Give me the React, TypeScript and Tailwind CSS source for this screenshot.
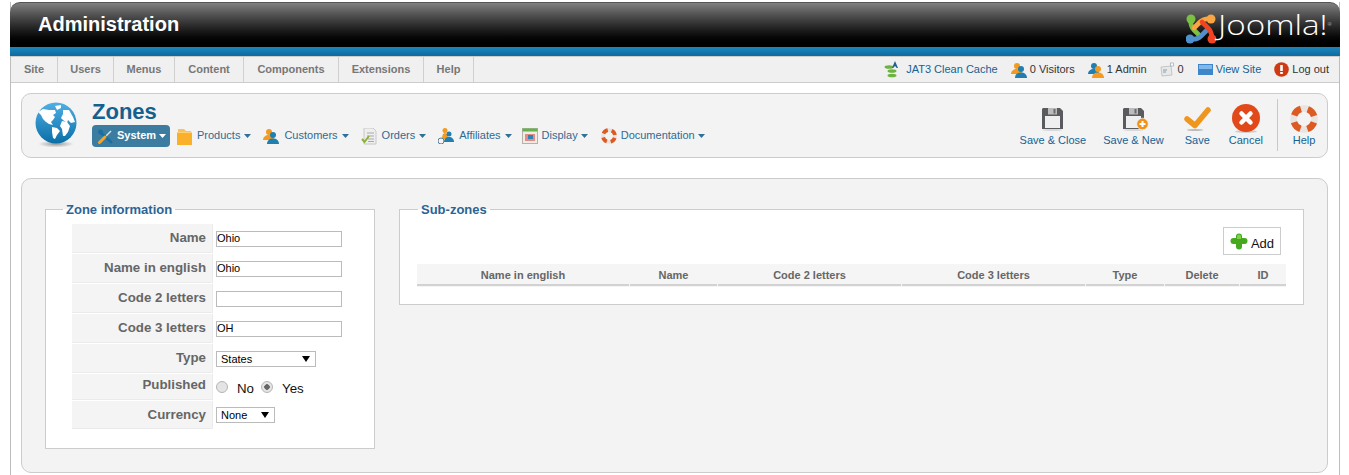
import type { ReactNode } from "react";

const arial = "font-['Liberation_Sans',Arial,sans-serif]";

function Caret({ white }: { white?: boolean }) {
  return (
    <svg width="7" height="4" viewBox="0 0 7 4" className="shrink-0">
      <path d="M0 0h7L3.5 4z" fill={white ? "#ffffff" : "#2f7098"} />
    </svg>
  );
}

function JoomlaLogo() {
  const hooks = [
    { c: "#7ac143", d: "M5 5 Q4 12 8 16 L14 22", x: 5, y: 5 },
    { c: "#f9a541", d: "M25 5 Q18 4 14 8 L8 14", x: 25, y: 5 },
    { c: "#5091cd", d: "M4 25 Q11 26 15 22 L21 16", x: 4, y: 25 },
    { c: "#f44321", d: "M26 25 Q26 18 22 14 L16 8", x: 26, y: 25 },
  ];
  return (
    <svg width="30" height="30" viewBox="0 0 30 30" className="shrink-0">
      {hooks.map((h) => (
        <g key={h.c}>
          <path d={h.d} fill="none" stroke={h.c} strokeWidth="4.600" strokeLinecap="round" />
          <circle cx={h.x} cy={h.y} r="4.500" fill={h.c} />
        </g>
      ))}
    </svg>
  );
}

function People({ front = "blue", size = 16 }: { front?: "blue" | "orange"; size?: number }) {
  const back = front === "blue" ? "#f39a1f" : "#1f7fb0";
  const main = front === "blue" ? "#1f7fb0" : "#f39a1f";
  return (
    <svg width={size} height={size} viewBox="0 0 16 16" className="shrink-0">
      <circle cx="6" cy="4" r="3" fill={back} />
      <path d="M0 12c0-3 2.500-5 6-5s5 2 5 5z" fill={back} />
      <circle cx="10" cy="7" r="3" fill={main} />
      <path d="M4 16c0-3.500 2.500-5.500 6-5.500s6 2 6 5.500z" fill={main} />
    </svg>
  );
}

function LifeRing({ size }: { size: number }) {
  return (
    <svg width={size} height={size} viewBox="0 0 28 28" className="shrink-0">
      <circle cx="14" cy="14" r="10.500" fill="none" stroke="#e9e4df" strokeWidth="6.500" />
      <circle
        cx="14"
        cy="14"
        r="10.500"
        fill="none"
        stroke="#dd5a22"
        strokeWidth="6.500"
        strokeDasharray="9.500 7"
        strokeDashoffset="-3.500"
      />
    </svg>
  );
}

function Globe() {
  return (
    <svg width="44" height="46" viewBox="0 0 44 46" className="shrink-0">
      <defs>
        <linearGradient id="globe" x1="0" y1="0" x2="0" y2="1">
          <stop offset="0" stopColor="#4fb0e6" />
          <stop offset="1" stopColor="#0a6ea6" />
        </linearGradient>
        <radialGradient id="shade">
          <stop offset="0" stopColor="#999" />
          <stop offset="1" stopColor="#f3f3f3" />
        </radialGradient>
      </defs>
      <ellipse cx="21" cy="42" rx="18" ry="3.500" fill="url(#shade)" />
      <circle cx="21" cy="21" r="20.500" fill="url(#globe)" />
      <g fill="#ffffff">
        <path d="M3 10l5-3 6 1 6 0 1 3-3 2 2 2-2 3-2 2 2 3-4-1-3-2-3-3-2-4z" />
        <path d="M17 25l5 1 3 3-3 4-2 4-2-1-1-6z" />
        <path d="M20 4l6-1 0 3-4 2z" />
        <path d="M28 8l6 0 4 7 2 5-4 1-3-3-1 3-4-3-2-2 2-4z" />
        <path d="M27 19l5 1 3 4-2 6-3 4-2 0-1-7-2-3z" />
      </g>
    </svg>
  );
}

function Floppy({ plus }: { plus?: boolean }) {
  return (
    <svg width="21" height="23" viewBox="0 0 21 23" className="mt-[2px] shrink-0 overflow-visible">
      <ellipse cx="10.500" cy="22" rx="10" ry="1" fill="#d8d8d8" />
      <path d="M1 0h17l3 3v18H0V1z" fill="#5a5b5e" />
      <rect x="6" y="0" width="9" height="6.500" fill="#bcbcbc" />
      <rect x="11.500" y="1" width="2" height="4.500" fill="#6c6c6c" />
      <rect x="3" y="8" width="15" height="12" fill="#efefef" />
      <rect x="17" y="19" width="1" height="1" fill="#ffffff" />
      {plus && (
        <g>
          <circle cx="19.500" cy="16" r="5.800" fill="#f0921a" stroke="#f3f3f3" strokeWidth="0.800" />
          <path d="M16.500 16h6M19.500 13v6" stroke="#ffffff" strokeWidth="2" />
        </g>
      )}
    </svg>
  );
}

function Check() {
  return (
    <svg width="27" height="24" viewBox="0 0 27 24" className="mt-px shrink-0">
      <path d="M3 12l8 6.500L24 3" fill="none" stroke="#ee961e" strokeWidth="5.500" strokeLinecap="round" strokeLinejoin="round" />
      <ellipse cx="11" cy="23" rx="8" ry="1" fill="#bbbbbb" />
    </svg>
  );
}

function CancelIcon() {
  return (
    <svg width="28" height="29" viewBox="0 0 28 29" className="shrink-0">
      <ellipse cx="14" cy="27.500" rx="11" ry="1.500" fill="#cccccc" />
      <circle cx="14" cy="14" r="14" fill="#e2491a" />
      <path d="M9.500 9.500l9 9M18.500 9.500l-9 9" stroke="#ffffff" strokeWidth="4.500" strokeLinecap="round" />
    </svg>
  );
}

function Tools() {
  return (
    <svg width="15" height="15" viewBox="0 0 15 15" className="shrink-0">
      <path d="M8 7l5-5" stroke="#d7e3ea" strokeWidth="1.500" />
      <path d="M2 3l11 10" stroke="#1a6fa0" strokeWidth="2.800" strokeLinecap="round" />
      <circle cx="2.500" cy="3" r="2.400" fill="#1a6fa0" />
      <path d="M1.500 13.500L7 8" stroke="#f4a62a" strokeWidth="3" strokeLinecap="round" />
    </svg>
  );
}

function Folder() {
  return (
    <svg width="15" height="17" viewBox="0 0 15 17" className="shrink-0">
      <path d="M1 1h6l2 2h5v3H1z" fill="#f7c35a" />
      <rect y="4" width="15" height="13" fill="#fbb02a" />
      <rect y="4" width="15" height="1" fill="#ffd27a" />
    </svg>
  );
}

function Orders() {
  return (
    <svg width="16" height="17" viewBox="0 0 16 17" className="shrink-0">
      <path d="M3 0h9l3 3v13H3z" fill="#eeeeee" stroke="#c8c8c8" />
      <path d="M6 5h7M6 8h7M7 11h6M7 13.500h6" stroke="#a9a9a9" />
      <path d="M1 11l2.500 3L8 8" fill="none" stroke="#8cb13d" strokeWidth="2" />
    </svg>
  );
}

function Affiliates() {
  return (
    <svg width="16" height="16" viewBox="0 0 16 16" className="shrink-0">
      <circle cx="7" cy="2.500" r="2.500" fill="#f39a1f" />
      <path d="M4 11c0-4 1-6 3-6s3 2 3 6z" fill="#f39a1f" />
      <circle cx="11" cy="6" r="2.500" fill="#1f7fb0" />
      <path d="M6 14c0-3 2-5 5-5s5 2 5 5z" fill="#1f7fb0" />
      <circle cx="3" cy="13" r="3" fill="#f3f3f3" stroke="#5a7f99" />
    </svg>
  );
}

function Display() {
  return (
    <svg width="16" height="17" viewBox="0 0 16 17" className="shrink-0">
      <rect x="0.500" y="0.500" width="15" height="15" fill="#f1ebe6" stroke="#b9b0aa" />
      <rect x="0.500" y="0.500" width="15" height="3" fill="#63b34d" />
      <rect x="3" y="6" width="10" height="7" fill="#e58b84" />
      <rect x="6" y="7" width="5" height="4" fill="#2a86b8" />
    </svg>
  );
}

function Jat() {
  return (
    <svg width="17" height="17" viewBox="0 0 17 17" className="shrink-0">
      <ellipse cx="5" cy="6" rx="4.500" ry="1.800" fill="#6cb33f" />
      <ellipse cx="8" cy="10" rx="4.500" ry="1.800" fill="#6cb33f" />
      <ellipse cx="8" cy="14.500" rx="4.500" ry="1.800" fill="#6cb33f" />
      <path d="M11 0l3 7h-1.500l-.6-1.500h-2l-.5 1.500H8z" fill="#1f5f93" />
    </svg>
  );
}

function MessageIcon() {
  return (
    <svg width="15" height="15" viewBox="0 0 15 15" className="shrink-0">
      <path d="M1 5l10-1 1 9-10 1z" fill="#e8e8e8" stroke="#bbbbbb" strokeWidth="0.800" />
      <path d="M3 8h4M3 10h3" stroke="#7d9fb8" />
      <rect x="10.500" y="1" width="3" height="3" fill="#ffffff" stroke="#99aabb" strokeWidth="0.700" />
    </svg>
  );
}

function ViewSite() {
  return (
    <svg width="15" height="11" viewBox="0 0 15 11" className="shrink-0">
      <rect width="15" height="11" fill="#3f86c8" />
      <rect x="1" y="1" width="13" height="4" fill="#7fb8ea" />
    </svg>
  );
}

function LogOut() {
  return (
    <svg width="15" height="15" viewBox="0 0 15 15" className="shrink-0">
      <circle cx="7.500" cy="7.500" r="7.300" fill="#cf3a12" />
      <rect x="6.200" y="3" width="2.600" height="6" fill="#ffffff" />
      <rect x="6.200" y="10" width="2.600" height="2" fill="#ffffff" />
    </svg>
  );
}

function GreenPlus() {
  return (
    <svg width="18" height="18" viewBox="0 0 18 18" className="mt-[1px] shrink-0">
      <path
        d="M6 5V3.500a3 3 0 0 1 6 0V5h2.500a3 3 0 0 1 0 6H12v2.500a3 3 0 0 1-6 0V11H3.500a3 3 0 0 1 0-6z"
        fill="#45a81e"
      />
      <path d="M7 3.500a2 2 0 0 1 4 0V6H7z" fill="#7ed348" />
    </svg>
  );
}

function TopMenuItem({ label, width }: { label: string; width: string }) {
  return (
    <div className={`flex h-full items-center justify-center border-r border-[#d0d0d0] text-[11px] font-bold text-[#777777] ${width}`}>
      {label}
    </div>
  );
}

function StatusItem({ icon, children, tone, gap = "gap-[3px]" }: { icon: ReactNode; children: string; tone: string; gap?: string }) {
  return (
    <div className={`flex items-center text-[11px] ${gap} ${tone}`}>
      {icon}
      <span>{children}</span>
    </div>
  );
}

function SubMenuItem({ icon, label, margin = "ml-[12px]", gap = "gap-[5px]" }: { icon: ReactNode; label: string; margin?: string; gap?: string }) {
  return (
    <div className={`flex items-center text-[11px] text-[#2f6a93] ${gap} ${margin}`}>
      {icon}
      <span className="mr-[-1px] pb-[2px]">{label}</span>
      <Caret />
    </div>
  );
}

function ToolButton({ icon, label, margin = "" }: { icon: ReactNode; label: string; margin?: string }) {
  return (
    <div className={`flex flex-col items-center ${margin}`}>
      <div className="flex h-[29px] items-center justify-center">{icon}</div>
      <span className="mt-px text-[11px] leading-[13px] text-[#146295]">{label}</span>
    </div>
  );
}

function Row({ label, height = "h-[29px]", labelClass = "", children }: { label: string; height?: string; labelClass?: string; children: ReactNode }) {
  return (
    <div className={`flex ${height}`}>
      <div className={`flex w-[141px] items-center justify-end border-r border-b border-[#ebebeb] bg-[#f4f4f4] pr-[6px] text-[13.3px] font-bold text-[#666666] ${labelClass}`}>
        {label}
      </div>
      <div className="flex items-center pl-[3px]">{children}</div>
    </div>
  );
}

function TextInput({ value }: { value: string }) {
  return (
    <input
      readOnly
      value={value}
      className="h-[16px] w-[126px] border border-[#bbbbbb] bg-white text-[11px] text-black outline-none"
    />
  );
}

function SelectBox({ value, width }: { value: string; width: string }) {
  return (
    <div className={`relative h-[16px] ${width}`}>
      <select
        value={value}
        onChange={() => undefined}
        className="block h-full w-full appearance-none border border-[#bbbbbb] bg-white pl-[4px] text-[11px] leading-[14px] text-black outline-none"
      >
        <option>{value}</option>
      </select>
      <span className="pointer-events-none absolute top-[5px] right-[6px] h-0 w-0 border-x-[4px] border-t-[6px] border-x-transparent border-t-black" />
    </div>
  );
}

function Radio({ on }: { on?: boolean }) {
  return (
    <input
      type="radio"
      readOnly
      checked={!!on}
      className={`h-[12px] w-[12px] appearance-none rounded-full border border-[#b5b5b5] ${
        on ? "bg-[radial-gradient(circle,#666666_0_2.5px,#e4e4e4_3px)]" : "bg-[#e4e4e4]"
      }`}
    />
  );
}

const columns = ["Name in english", "Name", "Code 2 letters", "Code 3 letters", "Type", "Delete", "ID"];

export default function App() {
  return (
    <div className={`h-[475px] overflow-hidden bg-white pt-[2px] ${arial}`}>
      <div className="ml-[10px] h-[473px] w-[1330px] border-x border-[#bdbdbd]">
        <header className="mx-[-1px] flex h-[45px] items-start justify-between rounded-t-[10px] border-t border-[#555555] bg-gradient-to-b from-[#808080] to-[#000000] pr-[10px] pl-[28px]">
          <h1 className="pt-[8px] text-[20px] leading-[26px] font-bold text-white">Administration</h1>
          <div className="flex items-center pt-[5px]">
            <JoomlaLogo />
            <span className="mt-[2px] ml-[2px] w-[112px] origin-left scale-x-[1.23] whitespace-nowrap font-['Open_Sans',sans-serif] text-[27px] leading-[30px] font-light text-white">
              Joomla!<span className="relative -top-[9px] text-[4px]">®</span>
            </span>
          </div>
        </header>
        <div className="mx-[-1px] h-[9px] bg-gradient-to-b from-[#1c86bd] to-[#0d6b9f]" />

        <nav className="flex h-[27px] items-center justify-between border-y border-[#cccccc] bg-[#f0f0f0] pr-[10px]">
          <div className="flex h-full">
            <TopMenuItem label="Site" width="w-[47px]" />
            <TopMenuItem label="Users" width="w-[56px]" />
            <TopMenuItem label="Menus" width="w-[61px]" />
            <TopMenuItem label="Content" width="w-[69px]" />
            <TopMenuItem label="Components" width="w-[95px]" />
            <TopMenuItem label="Extensions" width="w-[85px]" />
            <TopMenuItem label="Help" width="w-[50px]" />
          </div>
          <div className="flex items-center gap-[13px]">
            <StatusItem icon={<Jat />} tone="text-[#146295]" gap="gap-[5px]">JAT3 Clean Cache</StatusItem>
            <StatusItem icon={<People />} tone="text-[#333333]">0 Visitors</StatusItem>
            <StatusItem icon={<People front="orange" />} tone="text-[#333333]">1 Admin</StatusItem>
            <StatusItem icon={<MessageIcon />} tone="mr-px text-[#333333]">0</StatusItem>
            <StatusItem icon={<ViewSite />} tone="text-[#146295]">View Site</StatusItem>
            <StatusItem icon={<LogOut />} tone="text-[#333333]">Log out</StatusItem>
          </div>
        </nav>

        <div className="mx-[10px] mt-[10px] flex h-[65px] w-[1307px] items-start justify-between rounded-[10px] border border-[#cccccc] bg-[#f3f3f3]">
          <div className="flex pt-[8px] pl-[13px]">
            <Globe />
            <div className="mt-[-3px] ml-[13px]">
              <div className="text-[22px] leading-[26px] font-bold text-[#14608f]">Zones</div>
              <div className="flex h-[22px] items-center">
                <div className="flex h-[22px] w-[78px] items-center gap-[4px] rounded-[4px] bg-[#3c7ca0] pl-[6px] text-[11px] font-bold text-white">
                  <Tools />
                  <span className="mr-[-1px] pb-[2px]">System</span>
                  <Caret white />
                </div>
                <div className="ml-[-5px] flex items-center">
                  <SubMenuItem icon={<Folder />} label="Products" />
                  <SubMenuItem icon={<People />} label="Customers" />
                  <SubMenuItem icon={<Orders />} label="Orders" />
                  <SubMenuItem icon={<Affiliates />} label="Affiliates" />
                  <SubMenuItem icon={<Display />} label="Display" margin="ml-[10px]" gap="gap-[4px]" />
                  <SubMenuItem icon={<LifeRing size={16} />} label="Documentation" margin="ml-[13px]" gap="gap-[4px]" />
                </div>
              </div>
            </div>
          </div>
          <div className="flex pt-[10px] pr-[9px]">
            <ToolButton icon={<Floppy />} label="Save & Close" />
            <ToolButton icon={<Floppy plus />} label="Save & New" margin="ml-[17px]" />
            <ToolButton icon={<Check />} label="Save" margin="ml-[20px]" />
            <ToolButton icon={<CancelIcon />} label="Cancel" margin="ml-[18px]" />
            <div className="mt-[-5px] ml-[14px] h-[52px] w-px bg-[#c8c8c8]" />
            <ToolButton icon={<LifeRing size={28} />} label="Help" margin="ml-[12px]" />
          </div>
        </div>

        <main className="mx-[10px] mt-[20px] flex h-[295px] w-[1307px] items-start gap-[24px] rounded-[10px] border border-[#cccccc] bg-[#f3f3f3] pt-[23px] pl-[23px]">
          <fieldset className="h-[247px] w-[330px] border border-[#cccccc] bg-white pl-[26px]">
            <legend className="ml-[-9px] px-[3px] text-[13px] leading-[15px] font-bold text-[#2a6496]">Zone information</legend>
            <div className="mt-[7px] flex flex-col gap-px">
              <Row label="Name"><TextInput value="Ohio" /></Row>
              <Row label="Name in english"><TextInput value="Ohio" /></Row>
              <Row label="Code 2 letters"><TextInput value="" /></Row>
              <Row label="Code 3 letters"><TextInput value="OH" /></Row>
              <Row label="Type"><SelectBox value="States" width="w-[100px]" /></Row>
              <Row label="Published" height="h-[26px]" labelClass="pb-[3px]">
                <div className="flex items-center text-[13.3px] text-[#111111]">
                  <Radio />
                  <span className="mt-[3px] ml-[9px]">No</span>
                  <span className="ml-[7px] flex"><Radio on /></span>
                  <span className="mt-[3px] ml-[9px]">Yes</span>
                </div>
              </Row>
              <Row label="Currency" height="h-[28px]"><SelectBox value="None" width="w-[59px]" /></Row>
            </div>
          </fieldset>

          <fieldset className="h-[103px] w-[905px] border border-[#cccccc] bg-white px-[17px]">
            <legend className="ml-px px-[3px] text-[13px] leading-[15px] font-bold text-[#2a6496]">Sub-zones</legend>
            <div className="mt-[10px] flex justify-end pr-[5px]">
              <button className="flex h-[28px] w-[58px] items-center justify-center gap-[3px] border border-[#cccccc] bg-white text-[13px] text-[#111111]">
                <GreenPlus />
                <span className="mt-[5px]">Add</span>
              </button>
            </div>
            <div className="mt-[9px] grid h-[23px] w-[869px] grid-cols-[212px_87px_183px_183px_78px_74px_46px] gap-x-px bg-[#f5f5f5] pb-px">
              {columns.map((c) => (
                <div key={c} className="flex items-center justify-center border-b-2 border-[#d2d2d2] pt-[3px] text-[11px] font-bold text-[#666666]">
                  {c}
                </div>
              ))}
            </div>
          </fieldset>
        </main>
      </div>
    </div>
  );
}
